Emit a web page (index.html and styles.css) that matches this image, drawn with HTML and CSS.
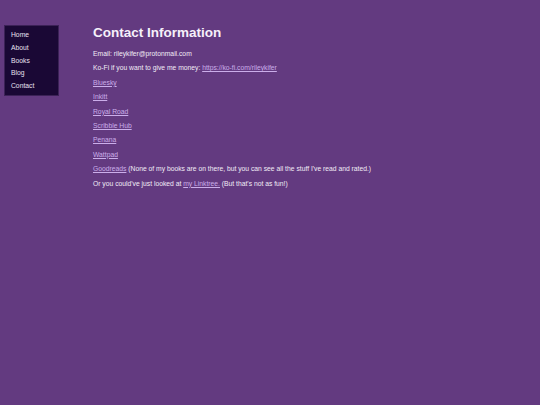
FILE: index.html
```html
<!DOCTYPE html>
<html lang="en">
<head>
<meta charset="utf-8">
<title>Contact Information</title>
<link rel="stylesheet" href="styles.css">
</head>
<body>
<div class="page">
  <nav class="sidenav">
    <a href="#">Home</a>
    <a href="#">About</a>
    <a href="#">Books</a>
    <a href="#">Blog</a>
    <a href="#">Contact</a>
  </nav>
  <main class="content">
    <h1 class="title">Contact Information</h1>
    <p>Email: rileykifer@protonmail.com</p>
    <p>Ko-Fi if you want to give me money: <a href="#">https://ko-fi.com/rileykifer</a></p>
    <p><a href="#">Bluesky</a></p>
    <p><a href="#">Inkitt</a></p>
    <p><a href="#">Royal Road</a></p>
    <p><a href="#">Scribble Hub</a></p>
    <p><a href="#">Penana</a></p>
    <p><a href="#">Wattpad</a></p>
    <p><a href="#">Goodreads</a> (None of my books are on there, but you can see all the stuff I've read and rated.)</p>
    <p>Or you could've just looked at <a href="#">my Linktree.</a> (But that's not as fun!)</p>
  </main>
</div>
</body>
</html>
```

FILE: styles.css
```css
html, body {
  margin: 0;
  padding: 0;
  background: #633a80;
  height: 100%;
}
body {
  font-family: "Liberation Sans", Arial, sans-serif;
  color: #f2ecf6;
}
.page {
  display: flex;
  align-items: flex-start;
  padding: 25px 0 0 4px;
}
.sidenav {
  display: flex;
  flex-direction: column;
  width: 47px;
  padding: 3.4px 0 2.6px 6px;
  background: #1a0835;
  border: 1px solid #3c2257;
}
.sidenav a {
  font-size: 6.75px;
  line-height: 12.6px;
  color: #e8e0f0;
  text-decoration: none;
}
.content {
  margin-left: 34px;
}
.title {
  margin: 0 0 9px 0;
  font-size: 13.5px;
  line-height: 16px;
  font-weight: bold;
  color: #f6f0fa;
}
.content p {
  margin: 0 0 6.4px 0;
  font-size: 6.75px;
  line-height: 8px;
}
.content a {
  color: #cbaeea;
  text-decoration: underline;
}
```
